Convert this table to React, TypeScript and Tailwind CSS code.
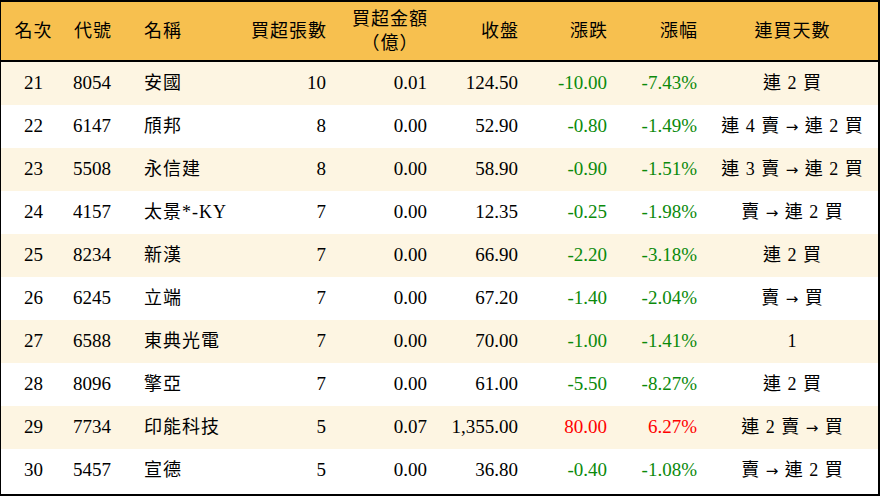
const rows = [
  ['21', '8054', '安國', '10', '0.01', '124.50', '-10.00', '-7.43%', '連 2 買'],
  ['22', '6147', '頎邦', '8', '0.00', '52.90', '-0.80', '-1.49%', '連 4 賣 → 連 2 買'],
  ['23', '5508', '永信建', '8', '0.00', '58.90', '-0.90', '-1.51%', '連 3 賣 → 連 2 買'],
  ['24', '4157', '太景*-KY', '7', '0.00', '12.35', '-0.25', '-1.98%', '賣 → 連 2 買'],
  ['25', '8234', '新漢', '7', '0.00', '66.90', '-2.20', '-3.18%', '連 2 買'],
  ['26', '6245', '立端', '7', '0.00', '67.20', '-1.40', '-2.04%', '賣 → 買'],
  ['27', '6588', '東典光電', '7', '0.00', '70.00', '-1.00', '-1.41%', '1'],
  ['28', '8096', '擎亞', '7', '0.00', '61.00', '-5.50', '-8.27%', '連 2 買'],
  ['29', '7734', '印能科技', '5', '0.07', '1,355.00', '80.00', '6.27%', '連 2 賣 → 買'],
  ['30', '5457', '宣德', '5', '0.00', '36.80', '-0.40', '-1.08%', '賣 → 連 2 買'],
]

const grid = 'grid grid-cols-[65px_64px_100px_106px_101px_91px_89px_90px_1fr]'

function Streak({ text }: { text: string }) {
  const parts = text.split('→')
  return (
    <>
      {parts.map((p, i) => (
        <span key={i}>
          {i > 0 && (
            <span className="text-[15px]" style={{ fontFamily: '"DejaVu Sans", sans-serif' }}>
              →
            </span>
          )}
          {p}
        </span>
      ))}
    </>
  )
}

export default function App() {
  return (
    <div
      className="w-[880px] h-[496px] bg-white overflow-hidden text-[19px] text-black"
      style={{ fontFamily: '"Liberation Serif", "Noto Sans CJK TC", serif' }}
    >
      <div className="border-black border-t-2 border-l border-r-2 border-b-2 h-[496px]">
        <div className={`${grid} h-[60px] bg-[#f7c04f] border-b-2 border-black items-center tracking-[1px] text-[18px]`}>
          <div className="text-center">名次</div>
          <div className="pl-[8px]">代號</div>
          <div className="pl-[14px]">名稱</div>
          <div className="text-right pr-[9px]">買超張數</div>
          <div className="flex justify-end pr-[9px]">
            <div className="flex flex-col items-center leading-[24px]">
              <span>買超金額</span>
              <span>（億）</span>
            </div>
          </div>
          <div className="text-right pr-[9px]">收盤</div>
          <div className="text-right pr-[9px]">漲跌</div>
          <div className="text-right pr-[9px]">漲幅</div>
          <div className="text-center">連買天數</div>
        </div>
        {rows.map((r, i) => {
          const up = !r[6].startsWith('-')
          const color = up ? 'text-[#ff0000]' : 'text-[#0b8a0b]'
          return (
            <div
              key={r[0]}
              className={`${grid} h-[43px] items-center ${i % 2 === 0 ? 'bg-[#fdf5e2]' : 'bg-white'}`}
            >
              <div className="text-center">{r[0]}</div>
              <div className="pl-[7px]">{r[1]}</div>
              <div className="pl-[14px] tracking-[1px] text-[18px] whitespace-nowrap">{r[2]}</div>
              <div className="text-right pr-[10px]">{r[3]}</div>
              <div className="text-right pr-[10px]">{r[4]}</div>
              <div className="text-right pr-[10px]">{r[5]}</div>
              <div className={`text-right pr-[10px] ${color}`}>{r[6]}</div>
              <div className={`text-right pr-[10px] ${color}`}>{r[7]}</div>
              <div className="text-center text-[18px] tracking-[1px] whitespace-nowrap">
                <Streak text={r[8]} />
              </div>
            </div>
          )
        })}
      </div>
    </div>
  )
}
